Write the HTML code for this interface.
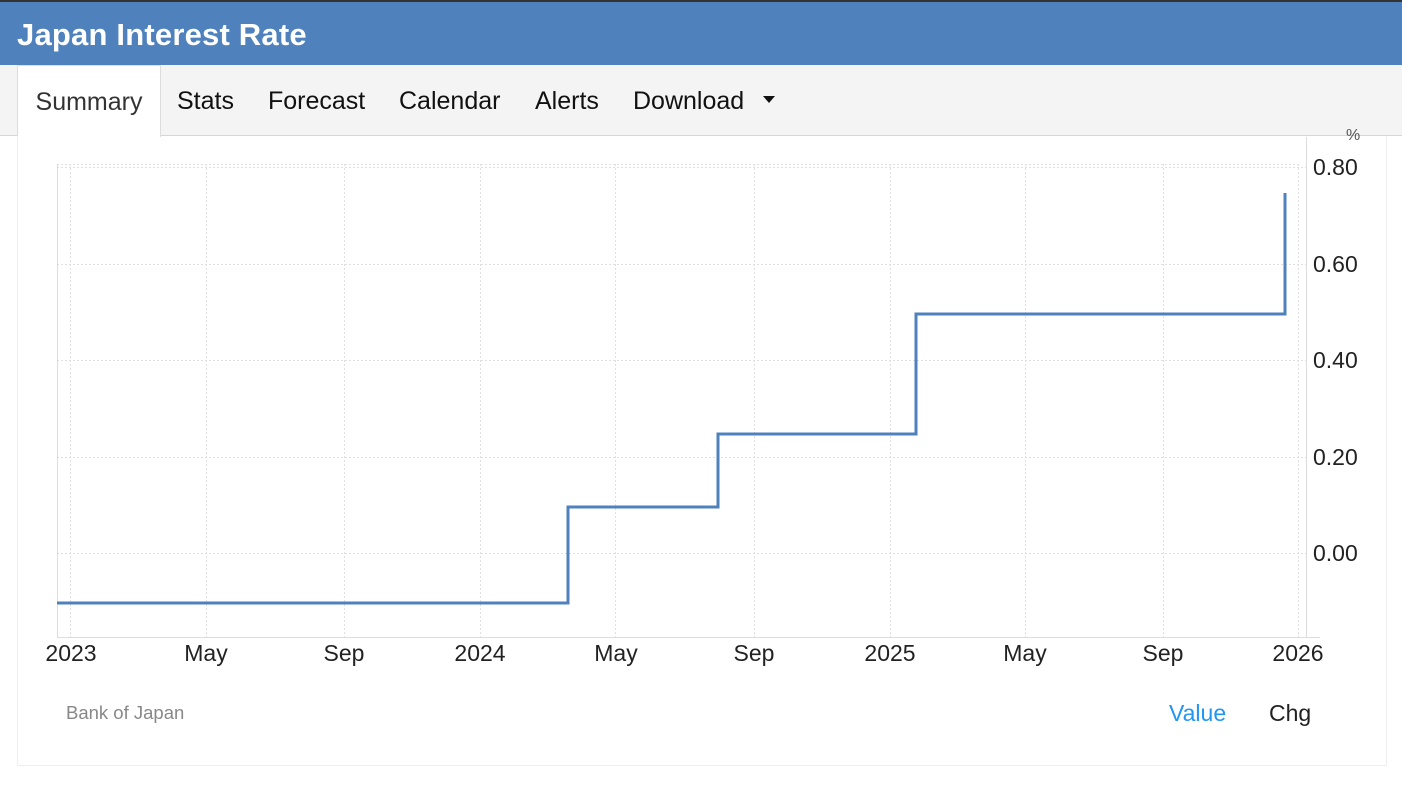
<!DOCTYPE html>
<html><head><meta charset="utf-8"><style>
body{margin:0;width:1402px;height:802px;background:#fff;font-family:"Liberation Sans",Arial,sans-serif;position:relative;overflow:hidden}
.top{position:absolute;left:0;top:0;width:1402px;height:2px;background:#333}
.hdr{position:absolute;left:0;top:2px;width:1402px;height:63px;background:#4f81bd;color:#fff;font-weight:bold;font-size:31px;line-height:66px;padding-left:17px;box-sizing:border-box;letter-spacing:0.2px}
.tabs{position:absolute;left:0;top:65px;width:1402px;height:71px;background:#f4f4f4;border-bottom:1px solid #d6d6d6;box-sizing:border-box}
.tab{position:absolute;top:0;height:71px;line-height:72px;font-size:25px;color:#111}
.act{left:17px;width:144px;background:#fff;border:1px solid #ddd;border-bottom:none;text-align:center;color:#333;height:72px;box-sizing:border-box}
.card{position:absolute;left:17px;top:136px;width:1370px;height:630px;border:1px solid #eee;border-top:none;box-sizing:border-box}
svg{position:absolute;left:0;top:0}
</style></head><body>
<div class="top"></div>
<div class="hdr">Japan Interest Rate</div>
<div class="tabs">
<div class="tab act">Summary</div>
<div class="tab" style="left:177px">Stats</div>
<div class="tab" style="left:268px">Forecast</div>
<div class="tab" style="left:399px">Calendar</div>
<div class="tab" style="left:535px">Alerts</div>
<div class="tab" style="left:633px">Download <span style="display:inline-block;width:0;height:0;border-left:6px solid transparent;border-right:6px solid transparent;border-top:7px solid #111;vertical-align:middle;margin-left:12px;position:relative;top:-3px"></span></div>
</div>
<div class="card"></div>
<svg width="1402" height="802" font-family="Liberation Sans,Arial,sans-serif">
<g stroke="#e0e0e0" stroke-width="1" stroke-dasharray="2,2" fill="none">
<path d="M57 164.5H1298M57 167.5H1306M57 264.5H1306M57 360.5H1306M57 457.5H1306M57 553.5H1306"/>
<path d="M70.5 164V637M206.5 164V637M344.5 164V637M480.5 164V637M615.5 164V637M754.5 164V637M890.5 164V637M1025.5 164V637M1163.5 164V637M1298.5 164V637"/>
</g>
<path d="M57.5 164V637.5H1320M1306.5 137V637" stroke="#ddd" stroke-width="1" fill="none"/>
<path d="M57 603H568V507H718V434H916V314H1285V193" stroke="#4f81bd" stroke-width="3" fill="none"/>
<g font-size="23" fill="#222">
<text x="1313" y="175">0.80</text><text x="1313" y="272">0.60</text><text x="1313" y="368">0.40</text><text x="1313" y="465">0.20</text><text x="1313" y="561">0.00</text>
</g>
<text x="1346" y="140" font-size="16" fill="#555">%</text>
<g font-size="23" fill="#222" text-anchor="middle">
<text x="71" y="661">2023</text><text x="206" y="661">May</text><text x="344" y="661">Sep</text><text x="480" y="661">2024</text><text x="616" y="661">May</text><text x="754" y="661">Sep</text><text x="890" y="661">2025</text><text x="1025" y="661">May</text><text x="1163" y="661">Sep</text><text x="1298" y="661">2026</text>
</g>
<text x="66" y="719" font-size="18.5" fill="#888">Bank of Japan</text>
<text x="1169" y="721" font-size="23" fill="#2196f3">Value</text>
<text x="1269" y="721" font-size="23" fill="#222">Chg</text>
</svg>
</body></html>
